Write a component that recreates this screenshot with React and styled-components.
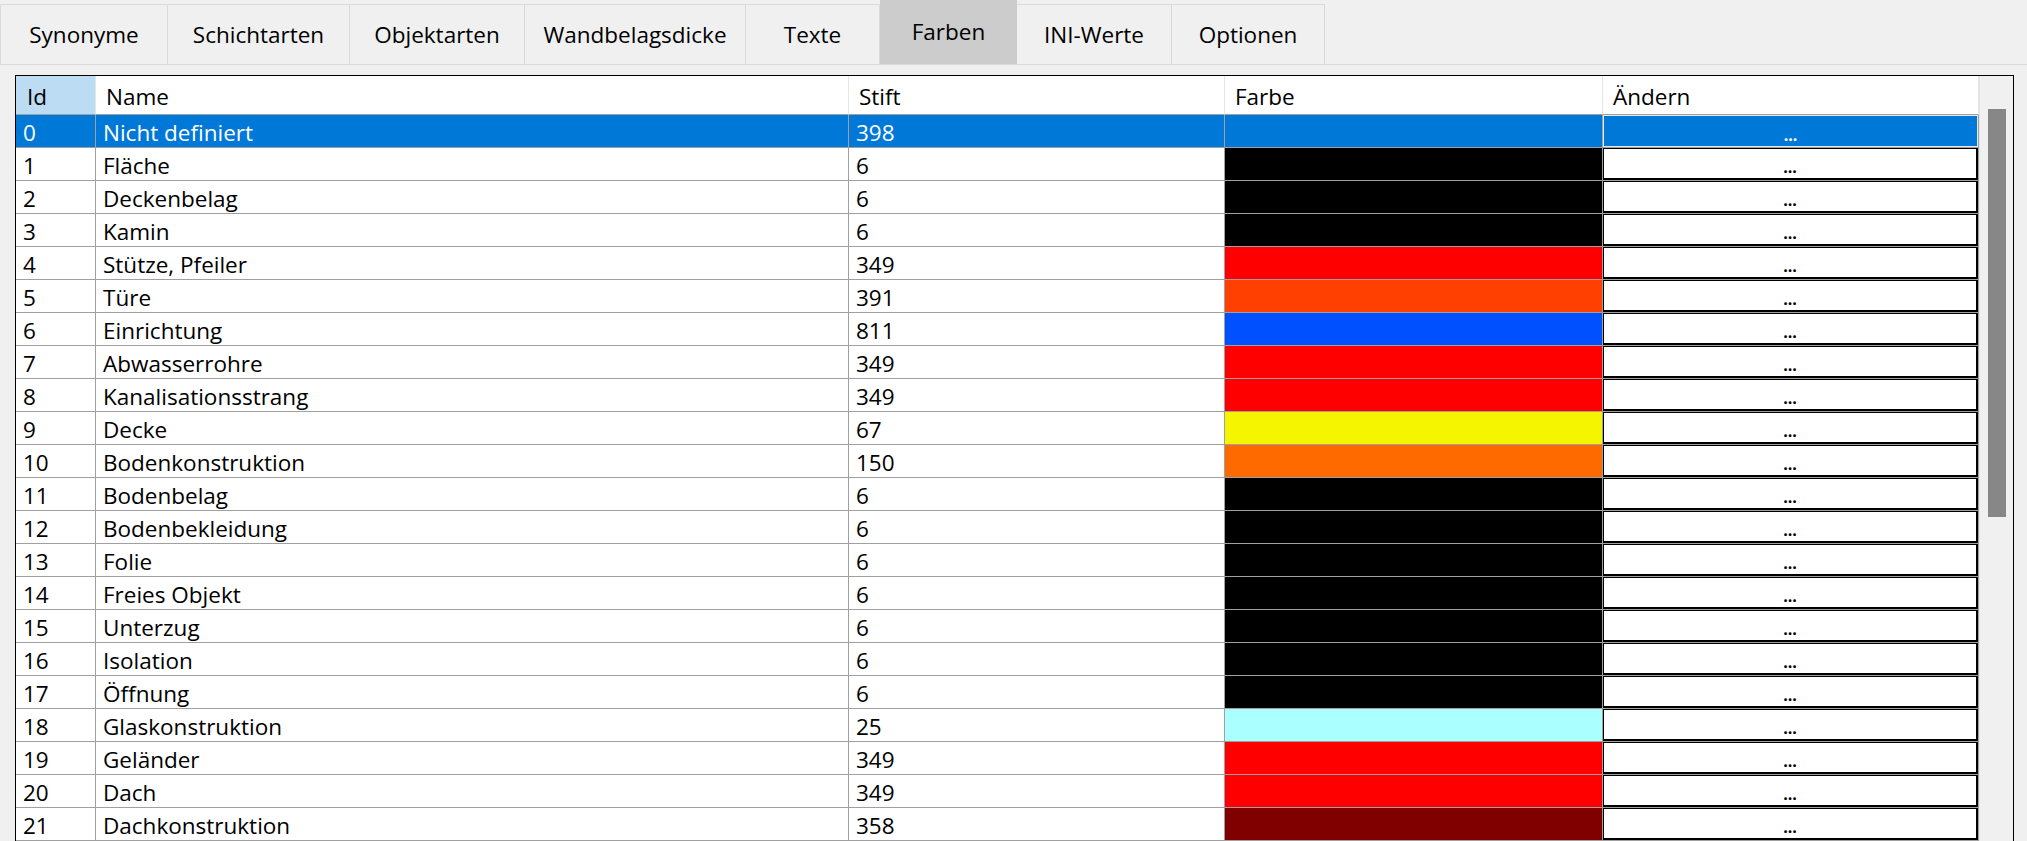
import styled, { createGlobalStyle } from 'styled-components'

const GlobalStyle = createGlobalStyle`
  html, body {
    margin: 0;
    padding: 0;
    background: #f0f0f0;
    overflow: hidden;
  }
  body {
    font-family: "Open Sans", "Noto Sans", sans-serif;
    color: #000;
  }
`

const tabs = [
  { label: 'Synonyme', width: 168 },
  { label: 'Schichtarten', width: 182 },
  { label: 'Objektarten', width: 175 },
  { label: 'Wandbelagsdicke', width: 221 },
  { label: 'Texte', width: 134 },
  { label: 'Farben', width: 137, active: true },
  { label: 'INI-Werte', width: 155 },
  { label: 'Optionen', width: 153 },
]

const rows = [
  { name: 'Nicht definiert', pen: 398, color: '#0078d7' },
  { name: 'Fläche', pen: 6, color: '#000000' },
  { name: 'Deckenbelag', pen: 6, color: '#000000' },
  { name: 'Kamin', pen: 6, color: '#000000' },
  { name: 'Stütze, Pfeiler', pen: 349, color: '#ff0000' },
  { name: 'Türe', pen: 391, color: '#ff4000' },
  { name: 'Einrichtung', pen: 811, color: '#0050ff' },
  { name: 'Abwasserrohre', pen: 349, color: '#ff0000' },
  { name: 'Kanalisationsstrang', pen: 349, color: '#ff0000' },
  { name: 'Decke', pen: 67, color: '#f5f500' },
  { name: 'Bodenkonstruktion', pen: 150, color: '#ff6a00' },
  { name: 'Bodenbelag', pen: 6, color: '#000000' },
  { name: 'Bodenbekleidung', pen: 6, color: '#000000' },
  { name: 'Folie', pen: 6, color: '#000000' },
  { name: 'Freies Objekt', pen: 6, color: '#000000' },
  { name: 'Unterzug', pen: 6, color: '#000000' },
  { name: 'Isolation', pen: 6, color: '#000000' },
  { name: 'Öffnung', pen: 6, color: '#000000' },
  { name: 'Glaskonstruktion', pen: 25, color: '#aaffff' },
  { name: 'Geländer', pen: 349, color: '#ff0000' },
  { name: 'Dach', pen: 349, color: '#ff0000' },
  { name: 'Dachkonstruktion', pen: 358, color: '#800000' },
]

const Page = styled.div`
  height: 841px;
  display: flex;
  flex-direction: column;
`

const TabBar = styled.div`
  height: 64px;
  display: flex;
  align-items: flex-end;
`

const Tab = styled.div`
  box-sizing: border-box;
  width: ${p => p.$width}px;
  height: ${p => (p.$active ? 64 : 60)}px;
  background: ${p => (p.$active ? '#cccccc' : '#f0f0f0')};
  border-top: ${p => (p.$active ? 'none' : '1px solid #d9d9d9')};
  border-right: ${p => (p.$active ? 'none' : '1px solid #d9d9d9')};
  display: flex;
  align-items: center;
  justify-content: center;
  font-size: 22.5px;
  line-height: 30px;
  padding-top: ${p => (p.$active ? 0 : 1)}px;

  &:first-child {
    border-left: 1px solid #d9d9d9;
  }
`

const Panel = styled.div`
  flex: 1;
  min-height: 0;
  border-top: 1px solid #d9d9d9;
  padding: 10px 13px 0 15px;
  display: flex;
`

const Frame = styled.div`
  flex: 1;
  border: 1px solid #000;
  border-bottom: none;
  display: flex;
  overflow: hidden;
  background: #fff;
`

const Table = styled.div`
  width: 1963px;
  display: flex;
  flex-direction: column;
`

const Row = styled.div`
  display: grid;
  grid-template-columns: 80px 753px 376px 378px 376px;
  background: ${p => (p.$selected ? '#0078d7' : '#fff')};
  color: ${p => (p.$selected ? '#fff' : '#000')};
`

const HeaderCell = styled.div`
  box-sizing: border-box;
  height: 39px;
  border-bottom: 1px solid #a0a0a0;
  border-right: 1px solid #e5e5e5;
  background: ${p => (p.$sorted ? '#bcdcf4' : '#fff')};
  padding: 4px 0 0 ${p => p.$pad || 10}px;
  font-size: 22.5px;
  line-height: 34px;
  white-space: nowrap;
`

const Cell = styled.div`
  box-sizing: border-box;
  height: 33px;
  border-bottom: 1px solid #a0a0a0;
  border-right: 1px solid #a0a0a0;
  padding: 3px 0 0 7px;
  font-size: 22.5px;
  line-height: 29px;
  white-space: nowrap;
  overflow: hidden;
`

const ColorCell = styled.div`
  height: 33px;
  box-sizing: border-box;
  border-bottom: 1px solid #a0a0a0;
  border-right: 1px solid #a0a0a0;
  background: ${p => p.$color};
`

const ButtonCell = styled.div`
  height: 33px;
  box-sizing: border-box;
  border-bottom: 1px solid #a0a0a0;
  border-right: 1px solid #a0a0a0;
  display: flex;
`

const EditButton = styled.div`
  flex: 1;
  box-sizing: border-box;
  border-style: solid;
  border-color: ${p => (p.$selected ? '#e8e8e8' : '#000')};
  border-width: ${p => (p.$selected ? '1px' : '1px 2px 2px 1px')};
  background: ${p => (p.$selected ? '#0078d7' : '#fff')};
  color: ${p => (p.$selected ? '#fff' : '#000')};
  display: flex;
  align-items: flex-end;
  justify-content: center;
  padding-bottom: 3px;
  font-size: 16px;
  font-weight: 700;
  line-height: 16px;
`

const Scrollbar = styled.div`
  width: 34px;
  background: #f0f0f0;
  border-left: 1px solid #e5e5e5;
  box-sizing: border-box;
  padding: 33px 7px 0 8px;
`

const Thumb = styled.div`
  height: 408px;
  background: #878787;
`

const App = () => {
  return (
    <Page>
      <GlobalStyle />
      <TabBar>
        {tabs.map(t => (
          <Tab key={t.label} $width={t.width} $active={t.active}>
            {t.label}
          </Tab>
        ))}
      </TabBar>
      <Panel>
        <Frame>
          <Table>
            <Row>
              <HeaderCell $sorted $pad={11}>Id</HeaderCell>
              <HeaderCell>Name</HeaderCell>
              <HeaderCell>Stift</HeaderCell>
              <HeaderCell>Farbe</HeaderCell>
              <HeaderCell>Ändern</HeaderCell>
            </Row>
            {rows.map((r, i) => (
              <Row key={i} $selected={i === 0}>
                <Cell>{i}</Cell>
                <Cell>{r.name}</Cell>
                <Cell>{r.pen}</Cell>
                <ColorCell $color={r.color} />
                <ButtonCell>
                  <EditButton $selected={i === 0}>...</EditButton>
                </ButtonCell>
              </Row>
            ))}
          </Table>
          <Scrollbar>
            <Thumb />
          </Scrollbar>
        </Frame>
      </Panel>
    </Page>
  )
}

export default App
